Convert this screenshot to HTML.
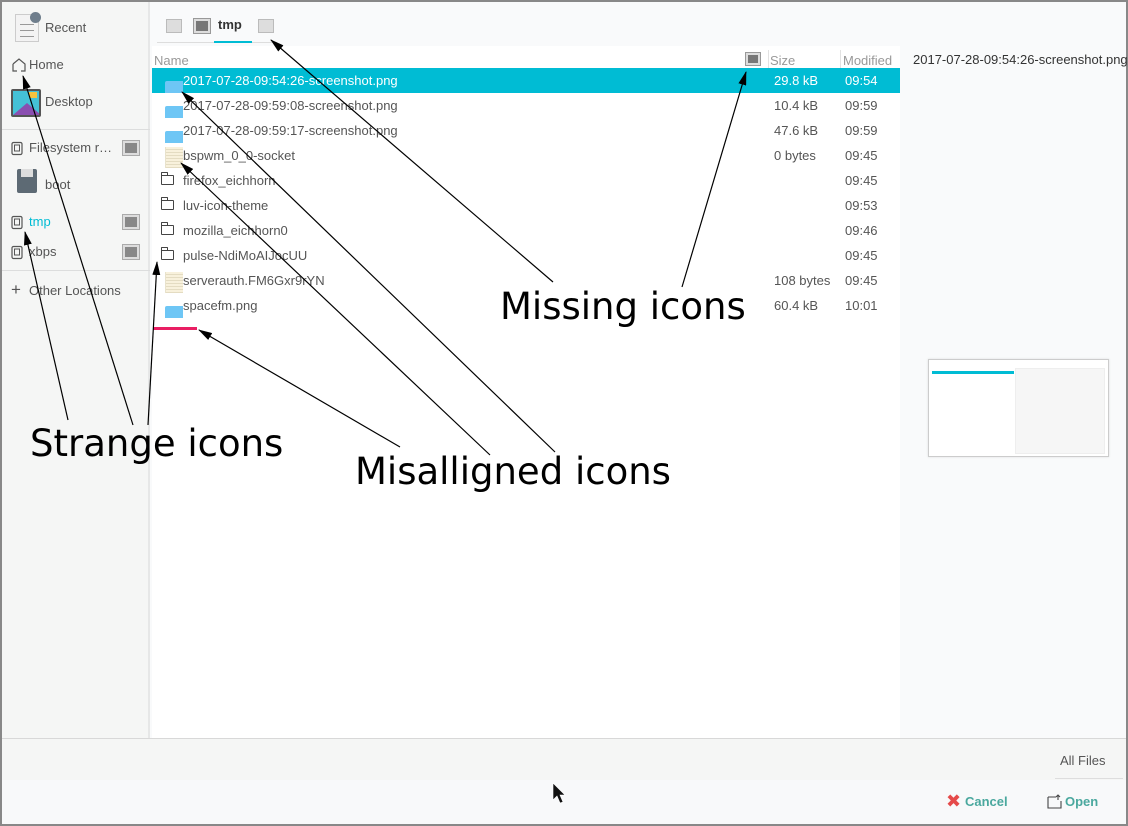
<!DOCTYPE html>
<html><head><meta charset="utf-8"><style>
*{margin:0;padding:0;box-sizing:border-box}
body{width:1128px;height:826px;background:#888;font-family:"Liberation Sans","DejaVu Sans",sans-serif;position:relative;overflow:hidden}
.win{position:absolute;left:2px;top:2px;width:1124px;height:822px;background:#f9fafb}
.side{position:absolute;left:0;top:0;width:148px;height:736px;background:#f5f6f5;border-right:2px solid #e6e7e7}
.si{position:absolute;font-size:13px;color:#555;white-space:nowrap}
.hr{position:absolute;left:0;width:148px;height:1px;background:#dcdddd}
.main{position:absolute;left:150px;top:0;width:748px;height:736px;background:#fff}
.path{position:absolute;left:150px;top:0;width:974px;height:44px;background:#f9fafb}
.right{position:absolute;left:898px;top:44px;width:226px;height:692px;background:#f9fafb}
.row{position:absolute;left:150px;width:748px;height:25px;font-size:13px;color:#555;line-height:25px;white-space:nowrap}
.row span{position:absolute}
.n{left:31px}.s{left:622px}.m{left:693px}
.sel{background:#00bcd4;color:#fff}
.folder{position:absolute;left:9px;top:7px;width:13px;height:10px;border:1.3px solid #444;border-radius:1px}
.folder:before{content:"";position:absolute;left:-1.3px;top:-4px;width:5px;height:3px;border:1.3px solid #444;border-bottom:none;border-radius:1px 1px 0 0}
.img{position:absolute;left:13px;top:13px;width:18px;height:12px;background:#6ec6f5;border-top-left-radius:2px;overflow:hidden}
.txt{position:absolute;left:13px;top:4px;width:18px;height:21px;background:repeating-linear-gradient(#f8f1dc 0 2px,#e4dcc2 2px 3px);border-left:1px solid #e8e2cc}
.drv{position:absolute;width:16px;height:14px;background:#888;border:2px solid #ddd;outline:1px solid #aaa}
.bot1{position:absolute;left:0;top:736px;width:1124px;height:42px;background:#f5f6f5;border-top:1px solid #d8d8d8}
.bot2{position:absolute;left:0;top:778px;width:1124px;height:44px;background:#f8f9fa}
.btn{position:absolute;font-size:13px;font-weight:bold;color:#4aa89e}
.ann{position:absolute;font-family:"DejaVu Sans","Liberation Sans",sans-serif;font-size:37px;color:#000;white-space:nowrap}
</style></head><body>
<div class="win">
<div class="side">
  <div style="position:absolute;left:13px;top:12px;width:24px;height:28px;background:#f3f3f3;border:1px solid #ccc;background-image:repeating-linear-gradient(transparent 0 5px,#999 5px 6px);background-size:14px 30px;background-position:4px 4px;background-repeat:no-repeat"></div>
  <div style="position:absolute;left:28px;top:10px;width:11px;height:11px;border-radius:50%;background:#6f7e8c"></div>
  <div class="si" style="left:43px;top:18px">Recent</div>
  <svg style="position:absolute;left:9px;top:55px" width="16" height="16"><path d="M2 7 L8 2 L14 7 V14 H10 M6 14 H2 V7" fill="none" stroke="#555" stroke-width="1.2"/></svg>
  <div class="si" style="left:27px;top:55px">Home</div>
  <div style="position:absolute;left:9px;top:87px;width:30px;height:28px;background:#44c1d6;border:2px solid #555;border-radius:2px;overflow:hidden"><div style="position:absolute;left:0;bottom:0;width:0;height:0;border-left:14px solid transparent;border-right:14px solid transparent;border-bottom:12px solid #8a4fb0"></div><div style="position:absolute;right:2px;top:1px;width:8px;height:6px;background:#f6c23e"></div></div>
  <div class="si" style="left:43px;top:92px">Desktop</div>
  <div class="hr" style="top:127px"></div>
  <svg style="position:absolute;left:9px;top:139px" width="12" height="15"><rect x="1" y="1.5" width="10" height="12" rx="1.5" fill="none" stroke="#555" stroke-width="1.2"/><rect x="3.5" y="4" width="5" height="6" fill="none" stroke="#555"/></svg>
  <div class="si" style="left:27px;top:138px">Filesystem r…</div>
  <div class="drv" style="left:121px;top:139px"></div>
  <div style="position:absolute;left:15px;top:167px;width:20px;height:24px;background:#5d6a74;border-radius:2px"><div style="position:absolute;left:4px;top:0;width:12px;height:8px;background:#ddd"></div></div>
  <div class="si" style="left:43px;top:175px">boot</div>
  <svg style="position:absolute;left:9px;top:213px" width="12" height="15"><rect x="1" y="1.5" width="10" height="12" rx="1.5" fill="none" stroke="#555" stroke-width="1.2"/><rect x="3.5" y="4" width="5" height="6" fill="none" stroke="#555"/></svg>
  <div class="si" style="left:27px;top:212px;color:#00bcd4">tmp</div>
  <div class="drv" style="left:121px;top:213px"></div>
  <svg style="position:absolute;left:9px;top:243px" width="12" height="15"><rect x="1" y="1.5" width="10" height="12" rx="1.5" fill="none" stroke="#555" stroke-width="1.2"/><rect x="3.5" y="4" width="5" height="6" fill="none" stroke="#555"/></svg>
  <div class="si" style="left:27px;top:242px">xbps</div>
  <div class="drv" style="left:121px;top:243px"></div>
  <div class="hr" style="top:268px"></div>
  <div class="si" style="left:9px;top:279px;font-size:17px;line-height:17px">+</div>
  <div class="si" style="left:27px;top:281px">Other Locations</div>
</div>
<div class="main"></div>
<div class="path">
  <div style="position:absolute;left:14px;top:17px;width:16px;height:14px;background:#ddd;border:1px solid #bbb"></div>
  <div style="position:absolute;left:42px;top:17px;width:16px;height:14px;background:#777;border:2px solid #ddd;outline:1px solid #999"></div>
  <div style="position:absolute;left:66px;top:15px;font-size:13px;font-weight:bold;color:#333">tmp</div>
  <div style="position:absolute;left:106px;top:17px;width:16px;height:14px;background:#ddd;border:1px solid #bbb"></div>
  <div style="position:absolute;left:5px;top:40px;width:120px;height:1px;background:#ddd"></div>
  <div style="position:absolute;left:62px;top:39px;width:38px;height:2px;background:#00bcd4"></div>
</div>
<div class="right"></div>
<div style="position:absolute;left:152px;top:51px;font-size:13px;color:#999">Name</div>
<div style="position:absolute;left:744px;top:51px;width:14px;height:12px;background:#777;border:2px solid #ddd;outline:1px solid #999"></div>
<div style="position:absolute;left:766px;top:48px;width:1px;height:20px;background:#e2e2e2"></div>
<div style="position:absolute;left:768px;top:51px;font-size:13px;color:#999">Size</div>
<div style="position:absolute;left:838px;top:48px;width:1px;height:20px;background:#e2e2e2"></div>
<div style="position:absolute;left:841px;top:51px;font-size:13px;color:#999">Modified</div>
<div style="position:absolute;left:911px;top:50px;font-size:13px;color:#333;white-space:nowrap">2017-07-28-09:54:26-screenshot.png</div>

<div class="row sel" style="top:66px"><div class="img"></div><span class="n">2017-07-28-09:54:26-screenshot.png</span><span class="s">29.8 kB</span><span class="m">09:54</span></div>
<div class="row" style="top:91px"><div class="img"></div><span class="n">2017-07-28-09:59:08-screenshot.png</span><span class="s">10.4 kB</span><span class="m">09:59</span></div>
<div class="row" style="top:116px"><div class="img"></div><span class="n">2017-07-28-09:59:17-screenshot.png</span><span class="s">47.6 kB</span><span class="m">09:59</span></div>
<div class="row" style="top:141px"><div class="txt"></div><span class="n">bspwm_0_0-socket</span><span class="s">0 bytes</span><span class="m">09:45</span></div>
<div class="row" style="top:166px"><div class="folder"></div><span class="n">firefox_eichhorn</span><span class="m">09:45</span></div>
<div class="row" style="top:191px"><div class="folder"></div><span class="n">luv-icon-theme</span><span class="m">09:53</span></div>
<div class="row" style="top:216px"><div class="folder"></div><span class="n">mozilla_eichhorn0</span><span class="m">09:46</span></div>
<div class="row" style="top:241px"><div class="folder"></div><span class="n">pulse-NdiMoAIJocUU</span><span class="m">09:45</span></div>
<div class="row" style="top:266px"><div class="txt"></div><span class="n">serverauth.FM6Gxr9rYN</span><span class="s">108 bytes</span><span class="m">09:45</span></div>
<div class="row" style="top:291px"><div class="img"></div><span class="n">spacefm.png</span><span class="s">60.4 kB</span><span class="m">10:01</span></div>
<div style="position:absolute;left:151px;top:325px;width:44px;height:3px;background:#e91e63"></div>

<div style="position:absolute;left:926px;top:357px;width:181px;height:98px;background:#fff;border:1px solid #ccc;box-shadow:0 0 2px #ddd">
  <div style="position:absolute;left:3px;top:11px;width:82px;height:3px;background:#00bcd4"></div>
  <div style="position:absolute;left:86px;top:8px;width:90px;height:86px;background:#f6f6f6;border:1px solid #eee"></div>
</div>

<div class="bot1"><div style="position:absolute;left:1058px;top:14px;font-size:13px;color:#555">All Files</div><div style="position:absolute;left:1053px;top:39px;width:68px;height:1px;background:#ddd"></div></div>
<div class="bot2">
  <div style="position:absolute;left:944px;top:12px;font-size:18px;font-weight:bold;color:#e54a4a;line-height:18px">✖</div>
  <div class="btn" style="left:963px;top:14px">Cancel</div>
  <svg style="position:absolute;left:1045px;top:14px" width="16" height="15"><path d="M1 3 H9 M1 3 V14 H14 V7 M11 1 V6 M9 3 L11 1 L13 3" fill="none" stroke="#444" stroke-width="1.1"/></svg>
  <div class="btn" style="left:1063px;top:14px">Open</div>
</div>
</div>
<svg style="position:absolute;left:0;top:0" width="1128" height="826">
<defs><marker id="a" markerWidth="14" markerHeight="8" refX="13" refY="4" orient="auto" markerUnits="userSpaceOnUse"><path d="M0 0 L14 4 L0 8 Z" fill="#000"/></marker></defs>
<g stroke="#000" stroke-width="1.2" marker-end="url(#a)">
<line x1="553" y1="282" x2="271" y2="40"/>
<line x1="682" y1="287" x2="746" y2="72"/>
<line x1="68" y1="420" x2="25" y2="232"/>
<line x1="133" y1="425" x2="23" y2="76"/>
<line x1="148" y1="425" x2="157" y2="262"/>
<line x1="400" y1="447" x2="199" y2="330"/>
<line x1="490" y1="455" x2="181" y2="163"/>
<line x1="555" y1="452" x2="182" y2="92"/>
</g>
<path d="M553 783 L553 800 L557 796 L560 803 L563 802 L560 795 L565 795 Z" fill="#111" stroke="#fff" stroke-width="0.6"/>
</svg>
<div class="ann" style="left:500px;top:285px">Missing icons</div>
<div class="ann" style="left:30px;top:422px">Strange icons</div>
<div class="ann" style="left:355px;top:450px">Misalligned icons</div>
</body></html>
